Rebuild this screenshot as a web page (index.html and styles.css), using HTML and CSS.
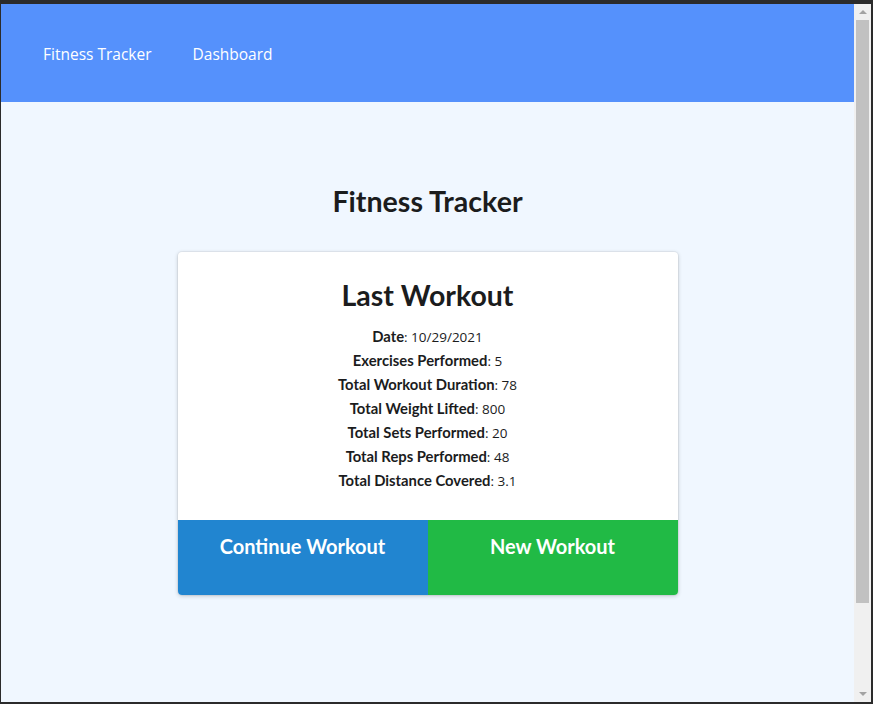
FILE: index.html
```html
<!DOCTYPE html>
<html lang="en">
<head>
<meta charset="utf-8">
<title>Fitness Tracker</title>
<link rel="stylesheet" href="styles.css">
</head>
<body>
<div class="frame">
  <div class="viewport">
    <nav class="navbar">
      <a class="nav-link" href="#">Fitness Tracker</a>
      <a class="nav-link" href="#">Dashboard</a>
    </nav>
    <main class="main">
      <h1 class="page-title">Fitness Tracker</h1>
      <section class="card">
        <div class="card-body">
          <h2 class="card-title">Last Workout</h2>
          <ul class="stats">
            <li><strong>Date</strong>: 10/29/2021</li>
            <li><strong>Exercises Performed</strong>: 5</li>
            <li><strong>Total Workout Duration</strong>: 78</li>
            <li><strong>Total Weight Lifted</strong>: 800</li>
            <li><strong>Total Sets Performed</strong>: 20</li>
            <li><strong>Total Reps Performed</strong>: 48</li>
            <li><strong>Total Distance Covered</strong>: 3.1</li>
          </ul>
        </div>
        <div class="actions">
          <a class="btn btn-blue" href="#">Continue Workout</a>
          <a class="btn btn-green" href="#">New Workout</a>
        </div>
      </section>
    </main>
  </div>
  <div class="scrollbar">
    <span class="arrow arrow-up"></span>
    <span class="thumb"></span>
    <span class="track-rest"></span>
    <span class="arrow arrow-down"></span>
  </div>
</div>
</body>
</html>
```

FILE: styles.css
```css
* { box-sizing: border-box; }
html, body { margin: 0; padding: 0; }
body {
  background: #2b2b2b;
  font-family: Lato, "Open Sans", sans-serif;
  color: #1b1c1d;
}
.frame {
  width: 873px;
  height: 704px;
  display: flex;
  padding: 4px 2px 2px 1px;
  background: #2b2b2b;
  overflow: hidden;
}
.viewport {
  flex: 1;
  background: #f0f7ff;
  display: flex;
  flex-direction: column;
  overflow: hidden;
}
.navbar {
  background: #5591fc;
  height: 98px;
  display: flex;
  align-items: center;
  padding: 2px 0 0 42px;
  gap: 41px;
  flex-shrink: 0;
}
.nav-link {
  color: #ffffff;
  text-decoration: none;
  font-family: "Open Sans", "Noto Sans", sans-serif;
  font-size: 15.5px;
}
.main {
  display: flex;
  flex-direction: column;
  align-items: center;
  padding-top: 82px;
}
.page-title {
  margin: 0 0 34px;
  font-family: Lato, sans-serif;
  font-weight: 700;
  font-size: 28.6px;
  line-height: 34px;
  color: #1b1c1d;
}
.card {
  width: 500px;
  background: #fff;
  border-radius: 4px;
  box-shadow: 0 1px 4px 0 rgba(0, 0, 0, 0.2), 0 0 0 1px rgba(0, 0, 0, 0.04);
  overflow: hidden;
}
.card-body {
  padding: 26px 16px 27px;
  text-align: center;
}
.card-title {
  margin: 0 0 13px;
  font-family: Lato, sans-serif;
  font-weight: 700;
  font-size: 28.5px;
  line-height: 34px;
}
.stats {
  list-style: none;
  margin: 0;
  padding: 0;
}
.stats li {
  font-family: "Open Sans", "Noto Sans", sans-serif;
  font-size: 13.5px;
  line-height: 24px;
  height: 24px;
}
.stats strong {
  font-family: Lato, sans-serif;
  font-weight: 700;
  font-size: 14.8px;
  line-height: 14px;
}
.actions {
  display: flex;
  height: 75px;
}
.btn {
  flex: 1;
  color: #fff;
  text-decoration: none;
  font-family: Lato, sans-serif;
  font-weight: 700;
  font-size: 20px;
  text-align: center;
  padding-top: 14px;
}
.btn-blue { background: #2185d0; }
.btn-green { background: #21ba45; }
.scrollbar {
  width: 17px;
  background: #f0f0f0;
  display: flex;
  flex-direction: column;
  align-items: center;
  flex-shrink: 0;
}
.arrow {
  width: 0;
  height: 0;
  border-left: 4px solid transparent;
  border-right: 4px solid transparent;
}
.arrow-up {
  margin: 6px 0 6px;
  border-bottom: 4px solid #a3a3a3;
}
.thumb {
  width: 13px;
  height: 583px;
  background: #c1c1c1;
}
.track-rest { flex: 1; }
.arrow-down {
  margin: 0 0 6px;
  border-top: 4px solid #a3a3a3;
}
```
